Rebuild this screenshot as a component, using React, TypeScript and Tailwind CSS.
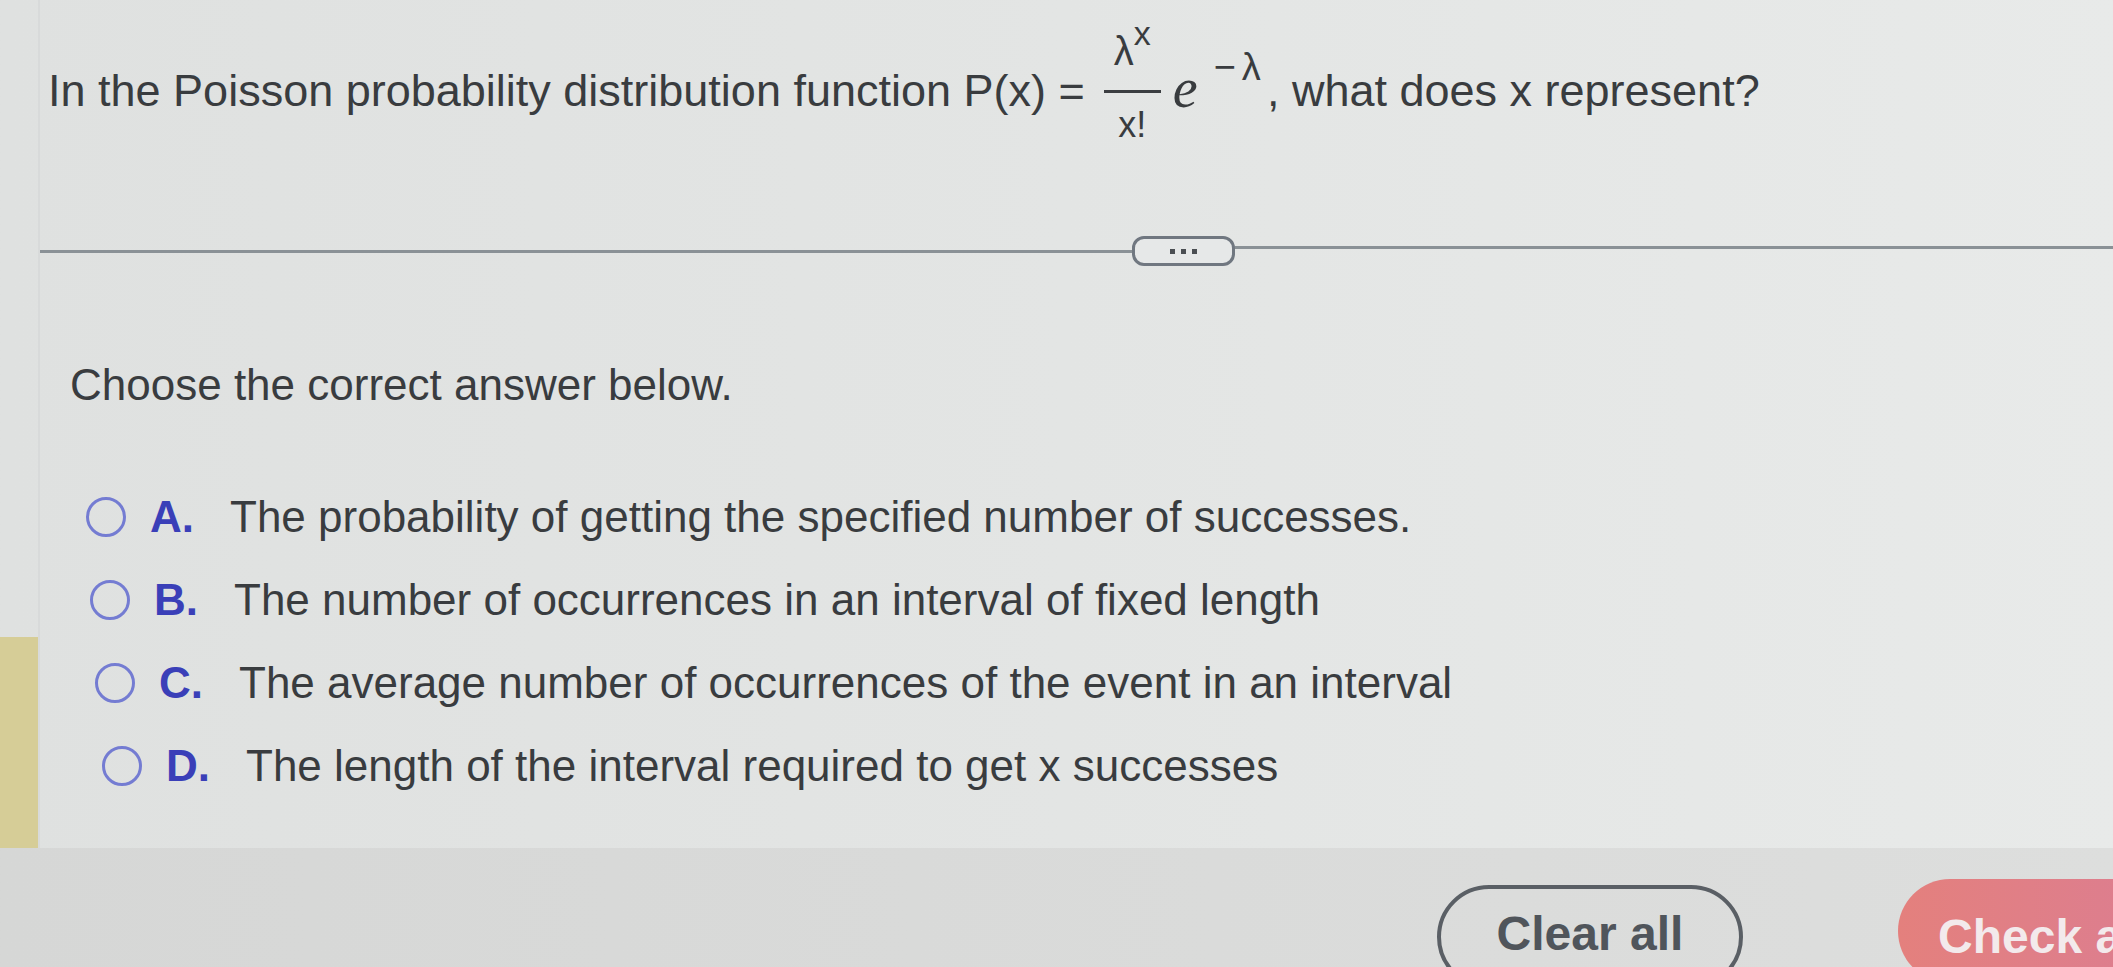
import React from 'react';

const options = [
  { letter: 'A.', text: 'The probability of getting the specified number of successes.', shift: 'pl-0' },
  { letter: 'B.', text: 'The number of occurrences in an interval of fixed length', shift: 'pl-[4px]' },
  { letter: 'C.', text: 'The average number of occurrences of the event in an interval', shift: 'pl-[9px]' },
  { letter: 'D.', text: 'The length of the interval required to get x successes', shift: 'pl-[16px]' },
];

// λ^x / x! fraction, stacked with flex
const Fraction = () => (
  <div className="flex flex-col items-center ml-[19px] mt-[-54px]">
    <div className="flex items-start justify-center h-[76px]">
      <span className="text-[40px] leading-none mt-[17px]">λ</span>
      <span className="text-[34px] leading-none mt-[2px]">x</span>
    </div>
    <div className="w-[57px] h-[3px] bg-[#3b3e41]" />
    <div className="text-[36px] leading-none mt-[14px]">x!</div>
  </div>
);

export default function App() {
  return (
    <div
      className="w-[2113px] h-[967px] overflow-hidden flex flex-col bg-gradient-to-r from-[#dfe1e0] via-[#e3e5e4] to-[#e8eae9] text-[#393c3f]"
      style={{ fontFamily: '"Liberation Sans", Arial, sans-serif' }}
    >
      {/* main question panel */}
      <div className="flex h-[848px] shrink-0">
        <div className="w-[38px] flex flex-col">
          <div className="h-[637px]" />
          <div className="flex-1 bg-[#d6cd97]" />
        </div>

        <div className="flex-1 flex flex-col border-l-2 border-[#d8dada]">
          {/* question line */}
          <div className="h-[236px] flex items-start pl-[8px] pt-[68px] text-[45px] leading-none">
            <span>In the Poisson probability distribution function P(x) =</span>
            <Fraction />
            <span className="text-[56px] italic mt-[-8px] ml-[12px]" style={{ fontFamily: '"Liberation Serif", serif' }}>e</span>
            <span className="text-[38px] mt-[-20px] ml-[16px] tracking-[6px]">−λ</span>
            <span>, what does x represent?</span>
          </div>

          {/* divider with expander */}
          <div className="h-[30px] flex items-center">
            <div className="w-[1092px] h-[3px] bg-[#8a9196]" />
            <button className="w-[103px] h-[30px] shrink-0 rounded-[12px] border-[3px] border-[#707780] bg-[#e6e8e8] flex items-center justify-center gap-[6px]">
              <span className="w-[5px] h-[5px] bg-[#4a4e52]" />
              <span className="w-[5px] h-[5px] bg-[#4a4e52]" />
              <span className="w-[5px] h-[5px] bg-[#4a4e52]" />
            </button>
            <div className="flex-1 h-[3px] bg-[#8a9196] mt-[-8px]" />
          </div>

          <div className="pl-[30px] mt-[97px] text-[44px] leading-none">Choose the correct answer below.</div>

          {/* answer choices */}
          <div className="flex flex-col mt-[88px] pl-[46px] gap-[39px]">
            {options.map((o) => (
              <label key={o.letter} className={`flex items-center h-[44px] ${o.shift}`}>
                <span className="w-[40px] h-[40px] rounded-full border-[3px] border-[#747cd2] shrink-0" />
                <span className="w-[104px] pl-[24px] shrink-0 text-[44px] leading-none font-bold text-[#3a3fb8]">{o.letter}</span>
                <span className="text-[44px] leading-none">{o.text}</span>
              </label>
            ))}
          </div>
        </div>
      </div>

      {/* footer */}
      <div className="flex-1 flex items-start bg-gradient-to-r from-[#d6d7d6] to-[#dddedd]">
        <button className="ml-[1437px] mt-[37px] w-[306px] h-[104px] shrink-0 rounded-full border-[4px] border-[#5a5f65] text-[48px] font-bold text-[#50555b] flex items-center justify-center pb-[6px]">
          Clear all
        </button>
        <button className="ml-[155px] mt-[31px] h-[104px] pl-[40px] pr-[40px] shrink-0 rounded-full bg-gradient-to-r from-[#e4807d] to-[#d87c9a] text-[48px] font-bold text-[#f3eaec] flex items-start pt-[22px] whitespace-nowrap">
          Check answer
        </button>
      </div>
    </div>
  );
}
